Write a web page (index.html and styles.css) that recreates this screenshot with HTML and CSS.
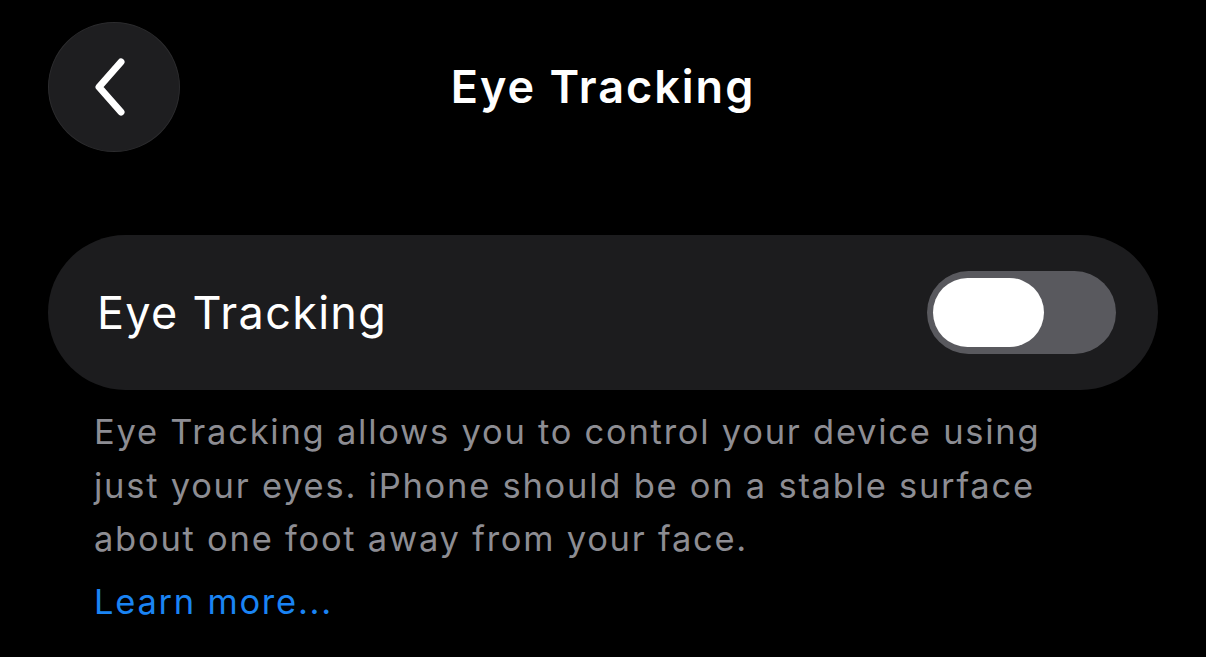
FILE: index.html
```html
<!DOCTYPE html>
<html lang="en">
<head>
<meta charset="utf-8">
<link rel="stylesheet" href="styles.css">
</head>
<body>
<div class="screen">
  <header class="nav">
    <button class="back" aria-label="Back">
      <svg width="36" height="60" viewBox="0 0 36 60"><path d="M29 5 L7 30 L29 55" fill="none" stroke="#fff" stroke-width="7" stroke-linecap="round" stroke-linejoin="round"/></svg>
    </button>
    <h1 class="title">Eye Tracking</h1>
  </header>
  <section class="card">
    <span class="label">Eye Tracking</span>
    <div class="toggle"><div class="knob"></div></div>
  </section>
  <p class="desc">Eye Tracking allows you to control your device using just your eyes. iPhone should be on a stable surface about one foot away from your face.</p>
  <a class="link" href="#">Learn more...</a>
</div>
</body>
</html>
```
FILE: styles.css
```css
html, body {
  margin: 0;
  padding: 0;
  background: #000;
}
body {
  font-family: Inter, "Noto Sans", sans-serif;
  color: #fff;
  width: 1206px;
  height: 657px;
  overflow: hidden;
}
.screen {
  padding: 22px 48px 0 48px;
}
.nav {
  position: relative;
  height: 130px;
  display: flex;
  align-items: center;
  justify-content: center;
}
.back {
  position: absolute;
  left: 0;
  top: 0;
  width: 132px;
  height: 130px;
  border-radius: 50%;
  background: #1e1e20;
  border: 1px solid #2c2c2e;
  box-sizing: border-box;
  display: flex;
  align-items: center;
  justify-content: center;
  padding: 0 8px 0 0;
}
.title {
  margin: 0;
  font-size: 45px;
  font-weight: 600;
  letter-spacing: 2px;
  margin-top: -2px;
}
.card {
  margin-top: 83px;
  height: 155px;
  border-radius: 78px;
  background: #1c1c1e;
  display: flex;
  align-items: center;
  justify-content: space-between;
  padding: 0 42px 0 49px;
}
.label {
  font-size: 45px;
  letter-spacing: 1.3px;
}
.toggle {
  width: 189px;
  height: 83px;
  border-radius: 42px;
  background: #59595e;
  padding: 7px 6px;
  box-sizing: border-box;
}
.knob {
  width: 111px;
  height: 69px;
  border-radius: 35px;
  background: #fff;
}
.desc {
  margin: 15px 0 0 46px;
  width: 1000px;
  font-size: 34.5px;
  line-height: 53.5px;
  letter-spacing: 1.75px;
  color: #8d8d93;
}
.link {
  display: block;
  margin: 9px 0 0 46px;
  font-size: 34.5px;
  line-height: 53.5px;
  letter-spacing: 1.75px;
  color: #1a84f4;
  text-decoration: none;
}
```
